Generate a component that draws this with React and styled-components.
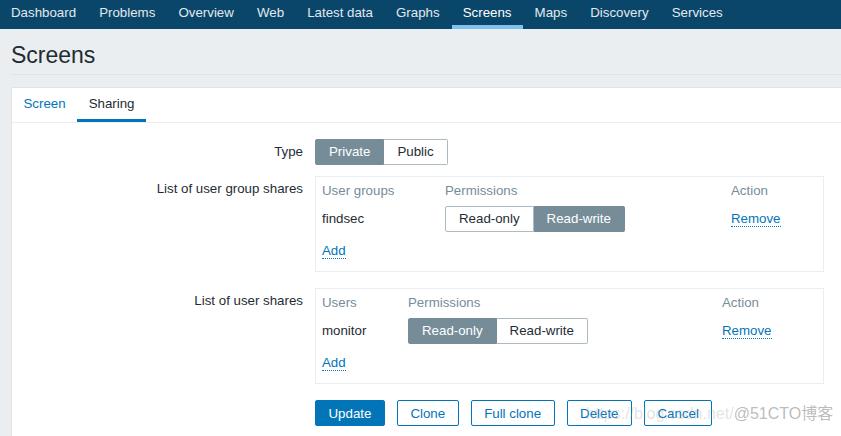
import React from "react";
import styled, { createGlobalStyle } from "styled-components";

const GlobalStyle = createGlobalStyle`
  html, body {
    margin: 0;
    padding: 0;
    background: #ebeef0;
    font-family: Arial, "Liberation Sans", "Noto Sans CJK SC", sans-serif;
    font-size: 13.3px;
    color: #1f2c33;
    overflow: hidden;
  }
`;

const navItems = [
  "Dashboard",
  "Problems",
  "Overview",
  "Web",
  "Latest data",
  "Graphs",
  "Screens",
  "Maps",
  "Discovery",
  "Services",
];

const groupShares = [{ name: "findsec", perm: "rw" }];
const userShares = [{ name: "monitor", perm: "ro" }];

const Segmented = ({ options, value }) => (
  <SegGroup>
    {options.map((o) => (
      <SegItem key={o.value} active={o.value === value}>
        {o.label}
      </SegItem>
    ))}
  </SegGroup>
);

const permOptions = [
  { value: "ro", label: "Read-only" },
  { value: "rw", label: "Read-write" },
];

const ShareTable = ({ cols, headers, rows }) => (
  <Table>
    <TableRow cols={cols}>
      {headers.map((h) => (
        <HeadCell key={h}>{h}</HeadCell>
      ))}
    </TableRow>
    {rows.map((r) => (
      <TableRow cols={cols} key={r.name} body>
        <Cell>{r.name}</Cell>
        <Cell>
          <Segmented options={permOptions} value={r.perm} />
        </Cell>
        <Cell>
          <DottedLink>Remove</DottedLink>
        </Cell>
      </TableRow>
    ))}
    <AddRow>
      <DottedLink>Add</DottedLink>
    </AddRow>
  </Table>
);

export default function App() {
  return (
    <Page>
      <GlobalStyle />
      <TopNav>
        {navItems.map((n) => (
          <NavItem key={n} active={n === "Screens"}>
            {n}
          </NavItem>
        ))}
      </TopNav>

      <Header>
        <Title>Screens</Title>
      </Header>

      <Panel>
        <Tabs>
          <Tab>Screen</Tab>
          <Tab active>Sharing</Tab>
        </Tabs>

        <Form>
          <FormRow>
            <Label center>Type</Label>
            <div>
              <Segmented
                options={[
                  { value: "private", label: "Private" },
                  { value: "public", label: "Public" },
                ]}
                value="private"
              />
            </div>
          </FormRow>

          <FormRow gap={16}>
            <Label>List of user group shares</Label>
            <ShareTable
              cols="123px 286px 1fr"
              headers={["User groups", "Permissions", "Action"]}
              rows={groupShares}
            />
          </FormRow>

          <FormRow gap={16}>
            <Label>List of user shares</Label>
            <ShareTable
              cols="86px 314px 1fr"
              headers={["Users", "Permissions", "Action"]}
              rows={userShares}
            />
          </FormRow>

          <FormRow>
            <span />
            <Buttons>
              <Button primary>Update</Button>
              <Button>Clone</Button>
              <Button>Full clone</Button>
              <Button>Delete</Button>
              <Button>Cancel</Button>
            </Buttons>
          </FormRow>
        </Form>
      </Panel>

      <Watermark>
        <span>https://blog.csdn.net/</span>
        <strong>@51CTO博客</strong>
      </Watermark>
    </Page>
  );
}

const Page = styled.div`
  position: relative;
  width: 100%;
  height: 436px;
  overflow: hidden;
`;

const TopNav = styled.nav`
  display: flex;
  height: 29px;
  background: #0a466a;
`;

const NavItem = styled.div`
  padding: 0 11.6px 0 11px;
  margin-right: 0.5px;
  line-height: 25px;
  height: 25px;
  border-bottom: 4px solid ${({ active }) => (active ? "#7ec3ef" : "transparent")};
  color: ${({ active }) => (active ? "#ffffff" : "#e3e9ed")};
  white-space: nowrap;
`;

const Header = styled.div`
  margin-left: 10px;
  padding: 11px 0 4px 1px;
  border-bottom: 1px solid #dfe4e7;
`;

const Title = styled.h1`
  margin: 0;
  font-size: 23px;
  font-weight: normal;
  line-height: 30px;
  color: #1f2c33;
`;

const Panel = styled.div`
  margin: 12px -10px 0 11px;
  background: #ffffff;
  border: 1px solid #dfe4e7;
  padding-bottom: 30px;
`;

const Tabs = styled.div`
  display: flex;
  border-bottom: 1px solid #ebeef0;
`;

const Tab = styled.div`
  padding: 1px 11.5px 0;
  line-height: 30px;
  border-bottom: 3px solid ${({ active }) => (active ? "#0275b8" : "transparent")};
  color: ${({ active }) => (active ? "#1f2c33" : "#0275b8")};
`;

const Form = styled.div`
  padding-top: 16px;
  display: flex;
  flex-direction: column;
`;

const FormRow = styled.div`
  display: grid;
  grid-template-columns: 291px 1fr;
  column-gap: 12px;
  align-items: start;
  margin-bottom: ${({ gap }) => (gap ? `${gap}px` : "11px")};
  padding-right: 26px;
`;

const Label = styled.div`
  text-align: right;
  line-height: ${({ center }) => (center ? "26px" : "18px")};
  padding-top: ${({ center }) => (center ? "0" : "4px")};
  white-space: nowrap;
`;

const SegGroup = styled.div`
  display: inline-flex;
`;

const SegItem = styled.div`
  height: 24px;
  line-height: 24px;
  padding: 0 13px;
  white-space: nowrap;
  background: ${({ active }) => (active ? "#768d99" : "#ffffff")};
  color: ${({ active }) => (active ? "#ffffff" : "#1f2c33")};
  border: 1px solid ${({ active }) => (active ? "#768d99" : "#acbbc2")};

  & + & {
    border-left-width: 0;
  }
  &:first-child {
    border-radius: 2px 0 0 2px;
  }
  &:last-child {
    border-radius: 0 2px 2px 0;
  }
`;

const Table = styled.div`
  border: 1px solid #ebeef0;
  padding: 4px 6px 11px;
  width: 495px;
`;

const TableRow = styled.div`
  display: grid;
  grid-template-columns: ${({ cols }) => cols};
  align-items: center;
  height: ${({ body }) => (body ? "26px" : "20px")};
  margin-top: ${({ body }) => (body ? "5px" : "0")};
`;

const HeadCell = styled.div`
  color: #768d99;
  line-height: 20px;
`;

const Cell = styled.div`
  line-height: 18px;
`;

const AddRow = styled.div`
  margin-top: 10px;
  line-height: 18px;
`;

const DottedLink = styled.span`
  color: #0275b8;
  border-bottom: 1px dotted #0275b8;
  cursor: pointer;
`;

const Buttons = styled.div`
  display: flex;
  gap: 12px;
`;

const Button = styled.button`
  height: 26px;
  padding: 0 12.5px;
  font: inherit;
  border-radius: 2px;
  border: 1px solid #0275b8;
  background: ${({ primary }) => (primary ? "#0275b8" : "#ffffff")};
  color: ${({ primary }) => (primary ? "#ffffff" : "#0275b8")};
  cursor: pointer;
`;

const Watermark = styled.div`
  position: absolute;
  left: 586px;
  top: 404px;
  font-size: 16px;
  line-height: 20px;
  white-space: nowrap;
  pointer-events: none;

  span {
    color: rgba(160, 160, 160, 0.3);
  }
  strong {
    font-weight: normal;
    color: rgba(130, 130, 130, 0.55);
  }
`;
